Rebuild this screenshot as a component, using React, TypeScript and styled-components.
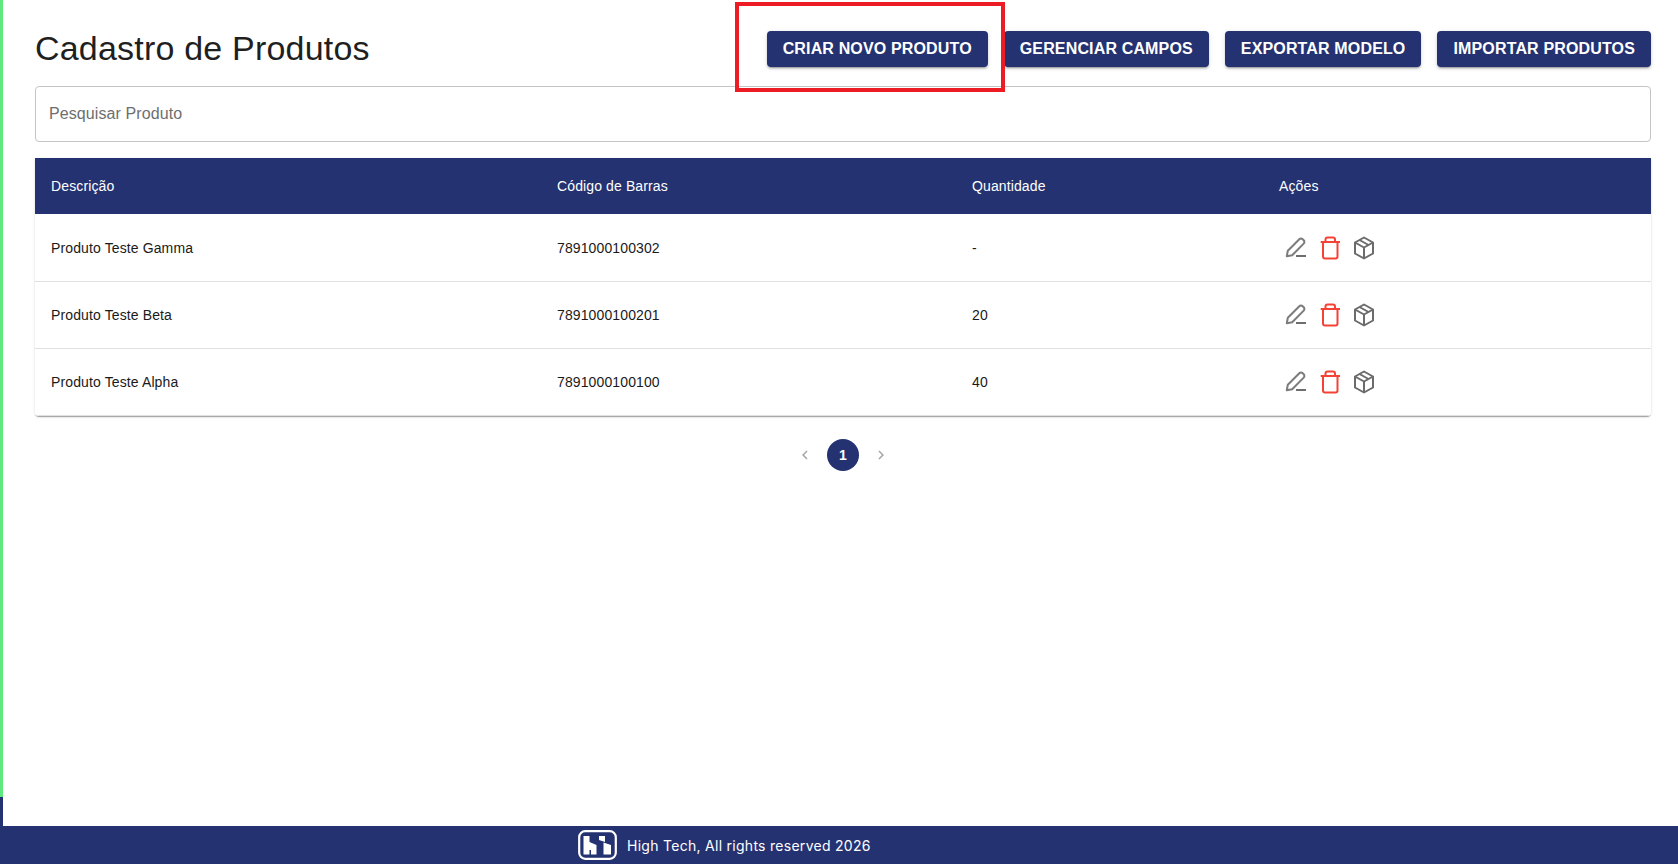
import styled, { createGlobalStyle } from 'styled-components';

const NAVY = '#243271';

const GlobalStyle = createGlobalStyle`
  html, body {
    margin: 0;
    padding: 0;
    background: #ffffff;
    font-family: "Liberation Sans", Arial, sans-serif;
  }
  * {
    box-sizing: border-box;
  }
`;

const Page = styled.div`
  display: flex;
  flex-direction: column;
  height: 864px;
  overflow: hidden;
`;

const Body = styled.div`
  display: flex;
  flex: 1;
  min-height: 0;
`;

const Rail = styled.div`
  width: 3px;
  display: flex;
  flex-direction: column;
  background: #5fe87f;
  &::after {
    content: '';
    margin-top: auto;
    height: 29px;
    background: ${NAVY};
  }
`;

const Main = styled.main`
  flex: 1;
  padding: 31px 27px 0 32px;
`;

const Header = styled.header`
  display: flex;
  align-items: center;
  justify-content: space-between;
  height: 36px;
  margin-bottom: 19px;
`;

const Title = styled.h1`
  margin: 0 0 3px;
  font-size: 34px;
  font-weight: 400;
  line-height: 36px;
  letter-spacing: 0.2px;
  color: #1f1f1f;
`;

const Actions = styled.div`
  display: flex;
  gap: 16px;
`;

const HighlightWrap = styled.div`
  position: relative;
`;

const Highlight = styled.div`
  position: absolute;
  left: -32px;
  top: -29px;
  width: 270px;
  height: 90px;
  border: 4px solid #ed1c24;
  pointer-events: none;
`;

const ActionButton = styled.button`
  height: 36px;
  padding: 0 16px;
  border: 0;
  border-radius: 4px;
  background: ${NAVY};
  color: #ffffff;
  font: 700 16px/1.5 "Liberation Sans", Arial, sans-serif;
  letter-spacing: 0.15px;
  white-space: nowrap;
  box-shadow: 0 3px 1px -2px rgba(0, 0, 0, 0.2), 0 2px 2px 0 rgba(0, 0, 0, 0.14),
    0 1px 5px 0 rgba(0, 0, 0, 0.12);
`;

const SearchBox = styled.div`
  height: 56px;
  display: flex;
  align-items: center;
  padding: 0 13px;
  border: 1px solid #c4c4c4;
  border-radius: 4px;
  margin-bottom: 16px;
  font-size: 16px;
  letter-spacing: 0.1px;
  color: #6e6e6e;
`;

const TableCard = styled.div`
  border-radius: 0 0 4px 4px;
  overflow: hidden;
  box-shadow: 0 2px 1px -1px rgba(0, 0, 0, 0.2), 0 1px 1px 0 rgba(0, 0, 0, 0.14),
    0 1px 3px 0 rgba(0, 0, 0, 0.12);
`;

const Row = styled.div<{ $head?: boolean }>`
  display: grid;
  grid-template-columns: 506px 415px 307px 1fr;
  align-items: center;
  height: ${(p) => (p.$head ? '56px' : '67px')};
  margin-bottom: ${(p) => (p.$head ? '1px' : '0')};
  background: ${(p) => (p.$head ? NAVY : '#ffffff')};
  color: ${(p) => (p.$head ? '#ffffff' : '#1a1a1a')};
  border-bottom: ${(p) => (p.$head ? 'none' : '1px solid #e0e0e0')};
  font-size: 14px;
  letter-spacing: 0.12px;
`;

const Cell = styled.div`
  padding: 0 16px;
`;

const IconRow = styled.div`
  display: flex;
  align-items: center;
  gap: 10px;
  padding-left: 21px;
`;

const IconSvg = styled.svg`
  width: 24px;
  height: 24px;
  fill: none;
  stroke-width: 2;
  stroke-linejoin: round;
`;

const EditIcon = () => (
  <IconSvg viewBox="0 0 24 24" stroke="#7c7c7c">
    <path d="M2.8 20.2l1-5.4L15.3 3.2a2.4 2.4 0 0 1 3.4 0l1 1a2.4 2.4 0 0 1 0 3.4L8.2 19.2z" />
    <path d="M12 20h10" stroke="#6e6e6e" />
  </IconSvg>
);

const TrashIcon = () => (
  <IconSvg viewBox="0 0 24 24" stroke="#f44336">
    <path d="M2.7 6h19.3" />
    <path d="M7.5 6V3.5a2 2 0 0 1 2-2h5.5a2 2 0 0 1 2 2V6" />
    <path d="M5 6v14.5a2 2 0 0 0 2 2h10.5a2 2 0 0 0 2-2V6" />
  </IconSvg>
);

const BoxIcon = () => (
  <IconSvg viewBox="0 0 24 24" stroke="#6b6b6b">
    <path d="M12 1.5l9 5v11l-9 5-9-5v-11z" />
    <path d="M3 6.5l9 5 9-5" />
    <path d="M12 11.5v11" />
    <path d="M7.5 4l9 5" />
  </IconSvg>
);

const Pagination = styled.nav`
  display: flex;
  justify-content: center;
  align-items: center;
  gap: 6px;
  margin-top: 23px;
`;

const PageArrow = styled.span`
  width: 32px;
  height: 32px;
  display: flex;
  align-items: center;
  justify-content: center;
  color: #a6a6a6;
`;

const PageNumber = styled.span`
  width: 32px;
  height: 32px;
  border-radius: 50%;
  background: ${NAVY};
  color: #ffffff;
  display: flex;
  align-items: center;
  justify-content: center;
  font-size: 14px;
  font-weight: 700;
`;

const Chevron = ({ flip }: { flip?: boolean }) => (
  <svg width="18" height="18" viewBox="0 0 24 24" fill="currentColor">
    <path d={flip ? 'M10 6 8.59 7.41 13.17 12l-4.58 4.59L10 18l6-6z' : 'M15.41 7.41 14 6l-6 6 6 6 1.41-1.41L10.83 12z'} />
  </svg>
);

const Footer = styled.footer`
  height: 38px;
  flex-shrink: 0;
  background: ${NAVY};
  display: flex;
  align-items: center;
  padding-left: 578px;
  gap: 10px;
  color: #ffffff;
  font: 400 14px "Inter", sans-serif;
  letter-spacing: 0.28px;
`;

const Logo = () => (
  <svg width="39" height="30" viewBox="0 0 39 30">
    <rect x="1.2" y="1.2" width="36.6" height="27.6" rx="6" fill="none" stroke="#ffffff" strokeWidth="2.2" />
    <path d="M5.5 6h6v6l7 3v9.5h-5.5v-4.5h-1.5v4.5h-6zM21 6h6v6l-6-2zM25.5 12.5l7.5 2.5v9.5h-7.5z" fill="#ffffff" />
  </svg>
);

const products = [
  { name: 'Produto Teste Gamma', code: '7891000100302', qty: '-' },
  { name: 'Produto Teste Beta', code: '7891000100201', qty: '20' },
  { name: 'Produto Teste Alpha', code: '7891000100100', qty: '40' },
];

export default function App() {
  return (
    <Page>
      <GlobalStyle />
      <Body>
        <Rail />
        <Main>
          <Header>
            <Title>Cadastro de Produtos</Title>
            <Actions>
              <HighlightWrap>
                <ActionButton>CRIAR NOVO PRODUTO</ActionButton>
                <Highlight />
              </HighlightWrap>
              <ActionButton>GERENCIAR CAMPOS</ActionButton>
              <ActionButton>EXPORTAR MODELO</ActionButton>
              <ActionButton>IMPORTAR PRODUTOS</ActionButton>
            </Actions>
          </Header>
          <SearchBox>Pesquisar Produto</SearchBox>
          <TableCard>
            <Row $head>
              <Cell>Descrição</Cell>
              <Cell>Código de Barras</Cell>
              <Cell>Quantidade</Cell>
              <Cell>Ações</Cell>
            </Row>
            {products.map((p) => (
              <Row key={p.code}>
                <Cell>{p.name}</Cell>
                <Cell>{p.code}</Cell>
                <Cell>{p.qty}</Cell>
                <IconRow>
                  <EditIcon />
                  <TrashIcon />
                  <BoxIcon />
                </IconRow>
              </Row>
            ))}
          </TableCard>
          <Pagination>
            <PageArrow>
              <Chevron />
            </PageArrow>
            <PageNumber>1</PageNumber>
            <PageArrow>
              <Chevron flip />
            </PageArrow>
          </Pagination>
        </Main>
      </Body>
      <Footer>
        <Logo />
        High Tech, All rights reserved 2026
      </Footer>
    </Page>
  );
}
